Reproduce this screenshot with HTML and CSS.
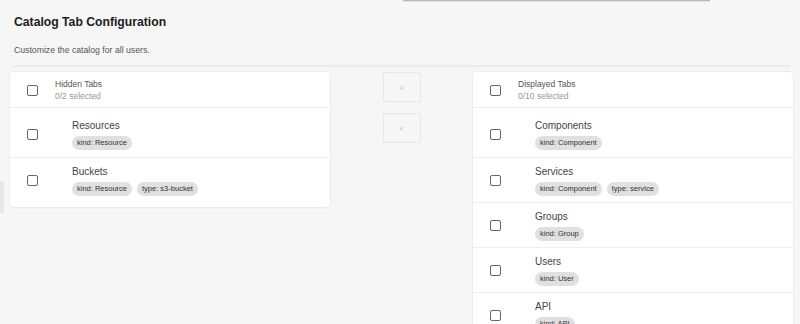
FILE: index.html
```html
<!DOCTYPE html>
<html>
    <head>
        <title>Catalog Tab Configuration</title>
        <link rel="stylesheet" href="styles.css">
    </head>
    <body>
        <div class="top-edge"></div>
        <div class="side-handle"></div>
        <div class="page">
            <h1 class="title">Catalog Tab Configuration</h1>
            <p class="subtitle">Customize the catalog for all users.</p>
            <hr class="divider">

            <div class="transfer">
                <div class="card">
                    <div class="card-head">
                        <span class="check"></span>
                        <div class="head-text">
                            <div class="head-title">Hidden Tabs</div>
                            <div class="head-count">0/2 selected</div>
                        </div>
                    </div>
                    <ul class="list">
                        <li class="item">
                            <span class="check"></span>
                            <div class="item-body">
                                <div class="item-title">Resources</div>
                                <div class="chips"><span class="chip">kind: Resource</span></div>
                            </div>
                        </li>
                        <li class="item">
                            <span class="check"></span>
                            <div class="item-body">
                                <div class="item-title">Buckets</div>
                                <div class="chips"><span class="chip">kind: Resource</span><span class="chip">type: s3-bucket</span></div>
                            </div>
                        </li>
                    </ul>
                </div>

                <div class="actions">
                    <button class="move">&gt;</button>
                    <button class="move">&lt;</button>
                </div>

                <div class="card">
                    <div class="card-head">
                        <span class="check"></span>
                        <div class="head-text">
                            <div class="head-title">Displayed Tabs</div>
                            <div class="head-count">0/10 selected</div>
                        </div>
                    </div>
                    <ul class="list">
                        <li class="item">
                            <span class="check"></span>
                            <div class="item-body">
                                <div class="item-title">Components</div>
                                <div class="chips"><span class="chip">kind: Component</span></div>
                            </div>
                        </li>
                        <li class="item">
                            <span class="check"></span>
                            <div class="item-body">
                                <div class="item-title">Services</div>
                                <div class="chips"><span class="chip">kind: Component</span><span class="chip">type: service</span></div>
                            </div>
                        </li>
                        <li class="item">
                            <span class="check"></span>
                            <div class="item-body">
                                <div class="item-title">Groups</div>
                                <div class="chips"><span class="chip">kind: Group</span></div>
                            </div>
                        </li>
                        <li class="item">
                            <span class="check"></span>
                            <div class="item-body">
                                <div class="item-title">Users</div>
                                <div class="chips"><span class="chip">kind: User</span></div>
                            </div>
                        </li>
                        <li class="item">
                            <span class="check"></span>
                            <div class="item-body">
                                <div class="item-title">API</div>
                                <div class="chips"><span class="chip">kind: API</span></div>
                            </div>
                        </li>
                        <li class="item">
                            <span class="check"></span>
                            <div class="item-body">
                                <div class="item-title">Systems</div>
                                <div class="chips"><span class="chip">kind: System</span></div>
                            </div>
                        </li>
                        <li class="item">
                            <span class="check"></span>
                            <div class="item-body">
                                <div class="item-title">Domains</div>
                                <div class="chips"><span class="chip">kind: Domain</span></div>
                            </div>
                        </li>
                    </ul>
                </div>
            </div>
        </div>
    </body>
</html>
```

FILE: styles.css
```css
html, body {
    height:100%;
    overflow:hidden;
}

body {
    margin:0;
    padding:0;
    background:#F6F6F6;
    font-family:"Liberation Sans", Arial, sans-serif;
    color:#333;
    position:relative;
}

.top-edge {
    position:absolute;
    top:0;
    left:403px;
    width:307px;
    height:1px;
    background:#B8B8B8;
    box-shadow:0 1px 0 #E2E2E2;
}

.side-handle {
    position:absolute;
    top:181px;
    left:0;
    width:4px;
    height:32px;
    background:#E8E8E8;
}

.page {
    padding:15px 7px 0 10px;
}

.title {
    margin:0 0 0 4px;
    font-size:12.2px;
    line-height:14px;
    font-weight:bold;
    color:#1C1C1C;
}

.subtitle {
    margin:15px 0 0 4px;
    font-size:8.7px;
    line-height:12px;
    color:#555;
}

.divider {
    margin:9px 3px 0 4px;
    height:2px;
    border:0;
    background:#EAEAEA;
}

.transfer {
    display:flex;
    align-items:flex-start;
    margin-top:5px;
}

.card {
    width:320px;
    flex:none;
    background:#FFF;
    border-radius:4px;
    box-shadow:0 0 0 1px #ECECEC, 0 1px 2px rgba(0,0,0,0.06);
}

.card-head {
    display:flex;
    align-items:center;
    box-sizing:border-box;
    height:36px;
    padding:1px 0 0 17px;
    border-bottom:1px solid #EEE;
}

.check {
    flex:none;
    box-sizing:border-box;
    width:11px;
    height:11px;
    border:1.3px solid #666;
    border-radius:2px;
}

.head-text {
    margin-left:17px;
    font-size:8.5px;
    line-height:12px;
}

.head-title {
    color:#555;
}

.head-count {
    color:#999;
}

.list {
    list-style:none;
    margin:0;
    padding:4px 0 5px 0;
}

.item {
    display:flex;
    align-items:center;
    box-sizing:border-box;
    height:45px;
    padding:7px 0 7px 17px;
}

.item + .item {
    border-top:1px solid #EEE;
}

.item-body {
    margin-left:34px;
}

.item-title {
    font-size:10px;
    line-height:14px;
    color:#444;
}

.chips {
    display:flex;
    gap:5px;
    margin-top:3px;
}

.chip {
    height:14px;
    line-height:14px;
    padding:0 5px;
    border-radius:7px;
    background:#E0E0E0;
    font-size:7.5px;
    color:#333;
}

.actions {
    flex:1;
    display:flex;
    flex-direction:column;
    align-items:center;
    gap:11px;
}

.move {
    width:38px;
    height:30px;
    padding:0;
    background:#F6F6F6;
    border:1px solid #E6E6E6;
    border-radius:2px;
    font-family:"Liberation Sans", Arial, sans-serif;
    font-size:8px;
    color:#BBB;
}
```
